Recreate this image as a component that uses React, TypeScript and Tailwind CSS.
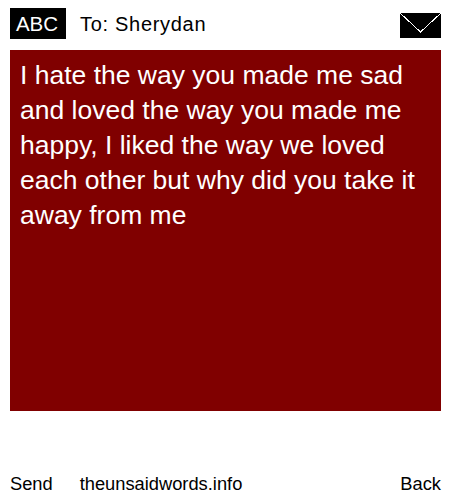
import React from "react";

const App = () => {
  return (
    <div className="w-[450px] h-[500px] bg-white text-black font-['Liberation_Sans',Arial,sans-serif] pl-[10px] pr-[9px] pt-2 flex flex-col">
      <div className="flex items-center h-[31px]">
        <div className="bg-black text-white w-[56px] h-[31px] flex items-center justify-center text-[20.5px] pt-[1px] pr-[2px]">
          ABC
        </div>
        <div className="ml-[14px] text-[20px] tracking-[0.7px]">To: Sherydan</div>
        <svg className="ml-auto mt-[3px]" width="41" height="25" viewBox="0 0 41 25" shapeRendering="crispEdges">
          <rect width="41" height="25" fill="#000" />
          <path d="M0 0 L20.5 19 L41 0" fill="none" stroke="#fff" strokeWidth="1" />
        </svg>
      </div>
      <div className="bg-[#800000] text-white mt-[11px] h-[361px] px-[10px] py-[8px] text-[26.5px] leading-[35px]">
        I hate the way you made me sad and loved the way you made me happy, I liked the way we loved each other but why did you take it away from me
      </div>
      <div className="flex items-center mt-[61px] text-[18.3px] leading-[24px]">
        <span>Send</span>
        <span className="ml-[27px]">theunsaidwords.info</span>
        <span className="ml-auto">Back</span>
      </div>
    </div>
  );
};

export default App;
